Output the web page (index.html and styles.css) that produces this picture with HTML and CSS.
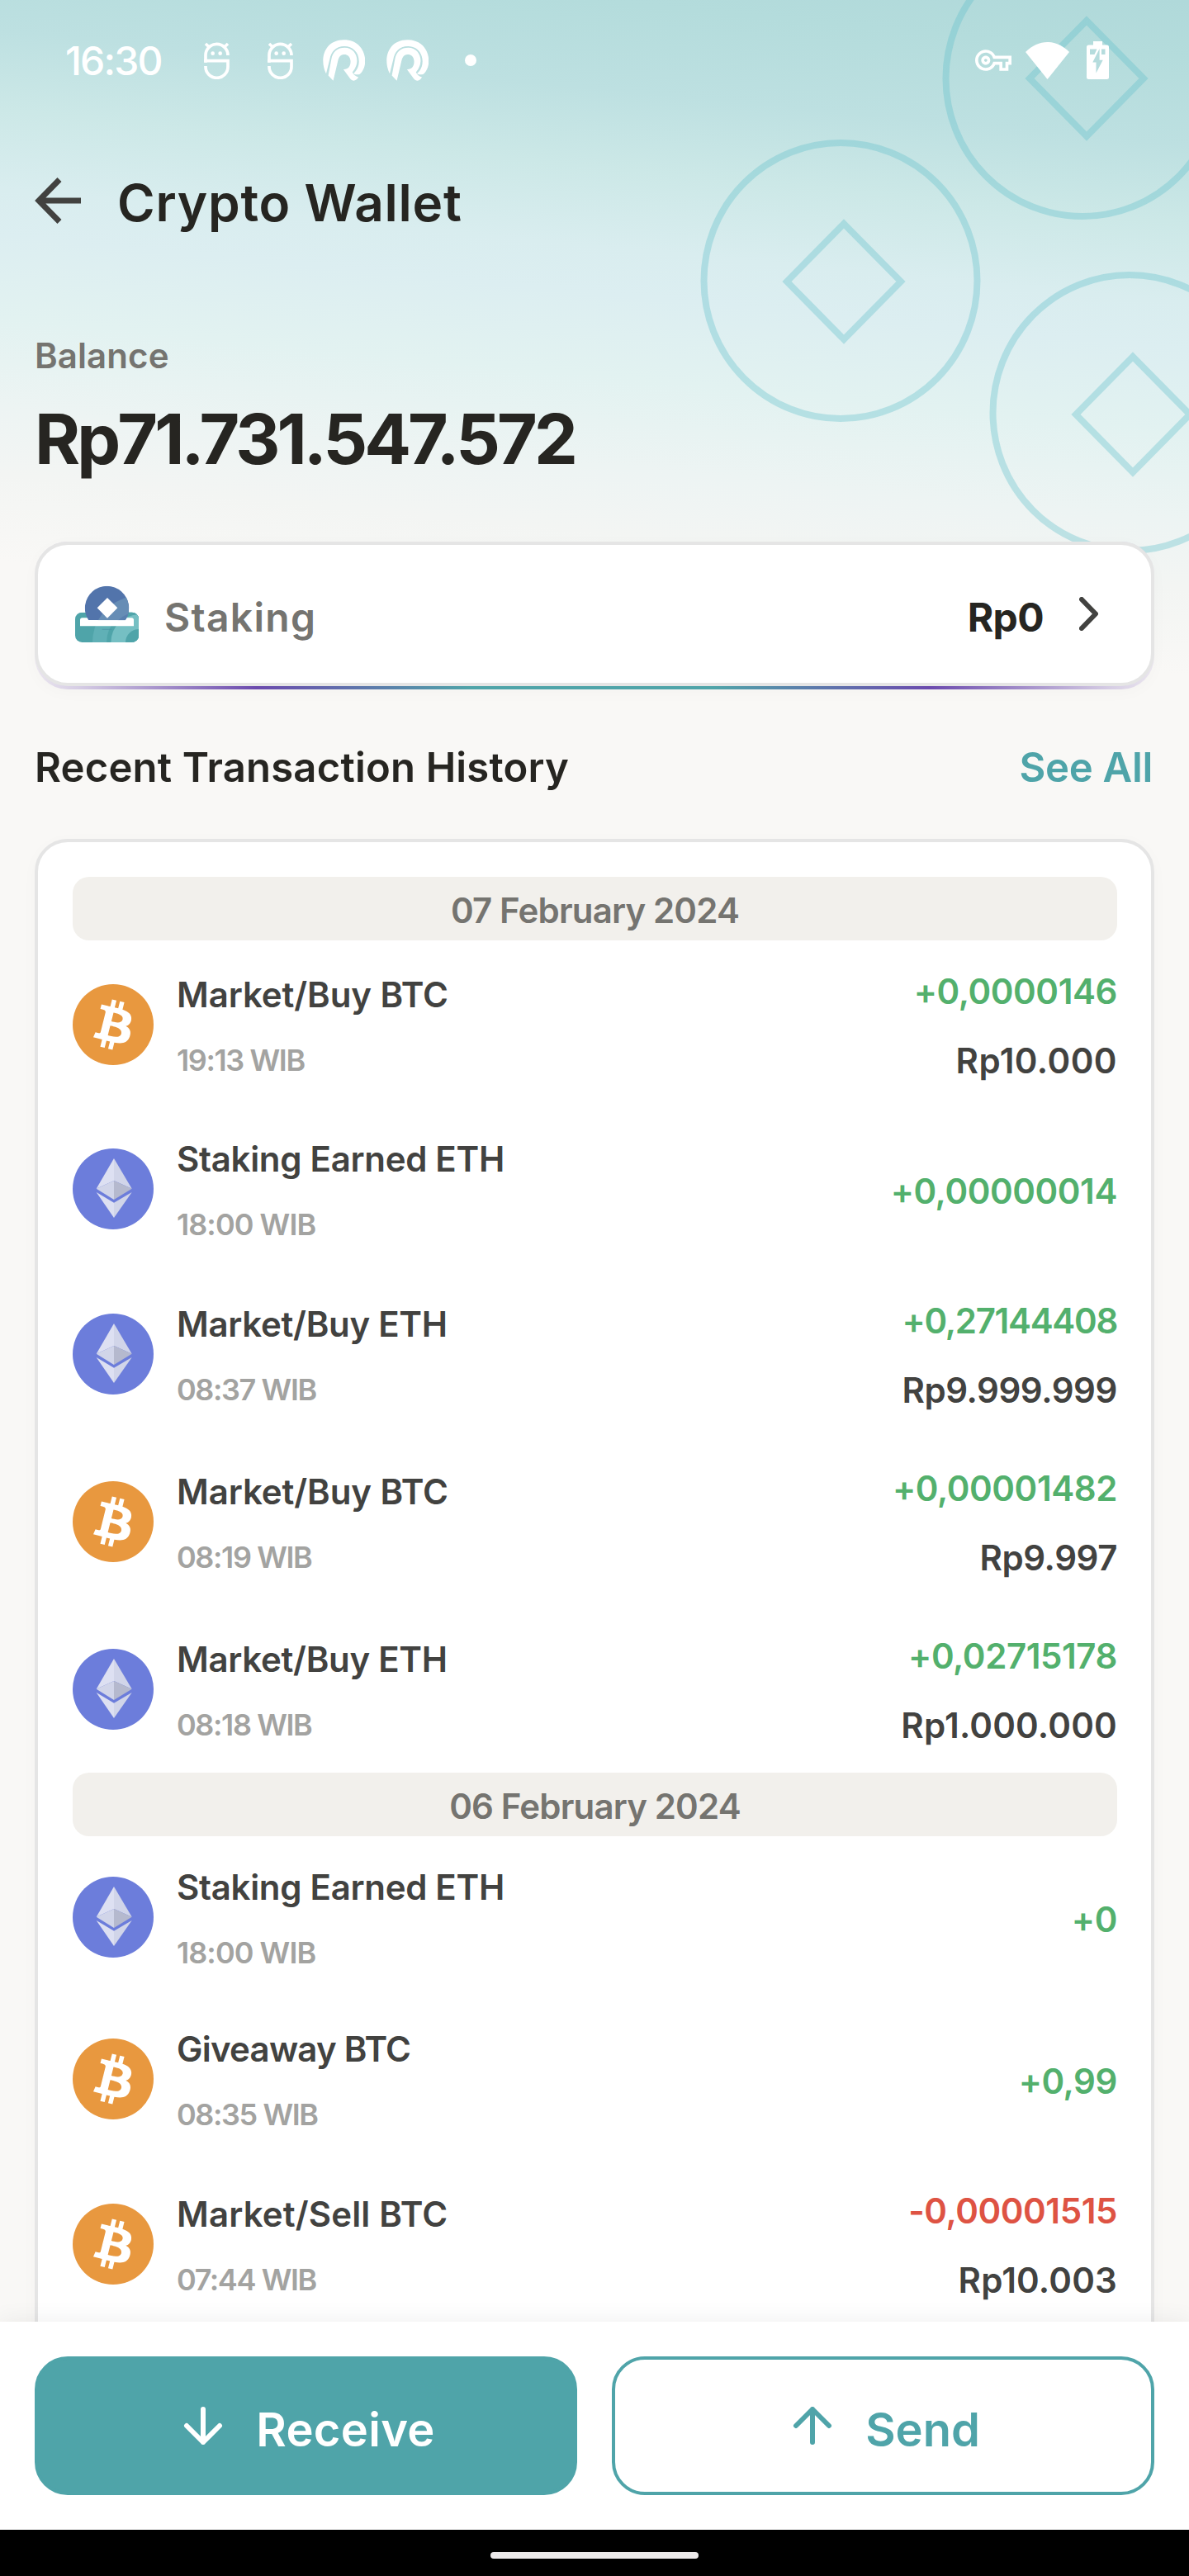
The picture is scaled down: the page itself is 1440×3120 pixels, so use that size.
FILE: index.html
```html
<!DOCTYPE html>
<html lang="en">
<head>
<meta charset="utf-8">
<title>Crypto Wallet</title>
<link rel="stylesheet" href="styles.css">
</head>
<body>
<svg class="defs" width="0" height="0" aria-hidden="true">
  <symbol id="face" viewBox="0 0 93 135">
    <g fill="none" stroke="#fff" stroke-width="11">
      <path d="M6 74V48A40.500 41 0 0 1 87 48"/>
      <path d="M0 68H87V90A40.500 40 0 0 1 6 90V87"/>
      <path d="M6 6L19 18M87 6L74 18"/>
    </g>
    <circle cx="32" cy="41" r="7" fill="#fff"/><circle cx="59" cy="41" r="7" fill="#fff"/>
  </symbol>
  <symbol id="arch" viewBox="0 0 154 150">
    <g fill="#fff">
      <path d="M12 124C-14 72 5 0 77 0C150 0 168 75 146 112C142 120 138 124 134 126C124 129 116 127 112 123C126 112 132 96 132 79C132 45 108 24 79 24C46 24 30 46 25 72Z"/>
      <path d="M20 131L31 72C36 43 54 29 80 29C108 29 126 51 125 79C124 98 114 112 108 119C112 128 120 134 130 137C122 152 108 153 100 142L75 108C94 109 103 94 101 76C99 60 88 53 77 54C63 55 58 65 55 78L38 150Z"/>
    </g>
  </symbol>
  <symbol id="btc" viewBox="0 0 32 32">
    <circle cx="16" cy="16" r="16" fill="#e8983f"/>
    <path fill="#fff" d="M23.189 14.02c.314-2.096-1.283-3.223-3.465-3.975l.708-2.84-1.728-.43-.69 2.765c-.454-.114-.92-.22-1.385-.326l.695-2.783L15.596 6l-.708 2.839c-.376-.086-.746-.17-1.104-.26l.002-.009-2.384-.595-.46 1.846s1.283.294 1.256.312c.7.175.826.638.805 1.006l-.806 3.235c.048.012.11.03.18.057l-.183-.045-1.13 4.532c-.086.212-.303.531-.793.41.018.025-1.256-.313-1.256-.313l-.858 1.978 2.25.561c.418.105.828.215 1.231.318l-.715 2.872 1.727.43.708-2.84c.472.127.93.245 1.378.357l-.706 2.828 1.728.43.715-2.866c2.948.558 5.164.333 6.097-2.333.752-2.146-.037-3.385-1.588-4.192 1.13-.26 1.98-1.003 2.207-2.538zm-3.95 5.538c-.533 2.147-4.148.986-5.32.695l.95-3.805c1.172.293 4.929.872 4.37 3.11zm.535-5.569c-.487 1.953-3.495.96-4.47.717l.86-3.45c.975.243 4.118.696 3.61 2.733z"/>
  </symbol>
  <symbol id="eth" viewBox="0 0 98 98">
    <circle cx="49" cy="49" r="49" fill="#6c7ddb"/>
    <path fill="#dde0f2" d="M50 12L28.700 48.700L50 39Z"/>
    <path fill="#d1d5e9" d="M50 12L71.700 48.700L50 39Z"/>
    <path fill="#d1d5e9" d="M28.700 48.700L50 39V62Z"/>
    <path fill="#b5b9ce" d="M71.700 48.700L50 39V62Z"/>
    <path fill="#dde0f2" d="M28.700 53L50 65.700V84Z"/>
    <path fill="#d1d5e9" d="M71.700 53L50 65.700V84Z"/>
  </symbol>
</svg>

<div class="screen">
  <svg class="coins" width="600" height="700" viewBox="840 0 600 700" aria-hidden="true">
    <g fill="none" stroke="#65c1cb" stroke-opacity=".37" stroke-width="8">
      <ellipse cx="1311" cy="95" rx="165.500" ry="167"/>
      <path d="M1316 25L1385 95L1316 165L1247 95Z"/>
      <ellipse cx="1018" cy="340" rx="165.500" ry="167"/>
      <path d="M1022 271L1091 341L1022 411L953 341Z"/>
      <ellipse cx="1368" cy="500" rx="165.500" ry="167"/>
      <path d="M1372 432L1441 502L1372 572L1303 502Z"/>
    </g>
  </svg>

  <main class="content">
    <div class="status">
      <span class="clock">16:30</span>
      <div class="notes">
        <svg width="31" height="45"><use href="#face"/></svg>
        <svg class="second-face" width="31" height="45"><use href="#face"/></svg>
        <svg class="first-arch" width="51" height="50"><use href="#arch"/></svg>
        <svg class="second-arch" width="51" height="50"><use href="#arch"/></svg>
        <i class="dot"></i>
      </div>
      <div class="system">
        <svg width="44" height="26" viewBox="0 5 24 14"><path fill="#fff" d="M22 19h-6v-4h-2.680c-1.140 2.420-3.600 4-6.320 4-3.860 0-7-3.140-7-7s3.140-7 7-7c2.720 0 5.170 1.580 6.320 4H24v6h-2v4zm-4-2h2v-4h2v-2H11.940l-.230-.670C11.010 8.340 9.110 7 7 7c-2.760 0-5 2.240-5 5s2.240 5 5 5c2.110 0 4.010-1.340 4.710-3.330l.230-.670H18v4zM7 15c-1.650 0-3-1.350-3-3s1.350-3 3-3 3 1.350 3 3-1.350 3-3 3zm0-4c-.550 0-1 .450-1 1s.450 1 1 1 1-.450 1-1-.450-1-1-1z"/></svg>
        <svg class="wifi" width="53" height="45" viewBox="0 0 53 45"><path fill="#fff" d="M0 12C16 -4 37 -4 53 12L26.500 45Z"/></svg>
        <svg class="battery" width="27" height="46" viewBox="0 0 27 46"><path fill="#fff" d="M8 0H19V4.500H24.500A2.500 2.500 0 0 1 27 7V43.500A2.500 2.500 0 0 1 24.500 46H2.500A2.500 2.500 0 0 1 0 43.500V7A2.500 2.500 0 0 1 2.500 4.500H8Z"/><path fill="#b5dcdd" d="M4 9.500H12.500L9.500 16H4ZM18 9.500H22.500V16H18ZM15.600 9L7.300 25.400H11.500V38.500L19.700 22.800H15.600Z"/></svg>
      </div>
    </div>

    <header class="appbar">
      <svg width="56" height="56" viewBox="0 0 56 56"><path fill="none" stroke="#424240" stroke-width="7" d="M30 2.500L5 28L30 53.500M4 28H56"/></svg>
      <h1>Crypto Wallet</h1>
    </header>

    <p class="label">Balance</p>
    <p class="total">Rp71.731.547.572</p>

    <div class="staking-edge">
      <div class="staking">
        <svg width="77" height="69" viewBox="0 0 231 207">
          <defs>
            <clipPath id="tray"><rect y="98" width="231" height="109" rx="25"/></clipPath>
            <clipPath id="coin"><path d="M49 127A80 80 0 1 1 182 127Z"/></clipPath>
          </defs>
          <g clip-path="url(#tray)">
            <path fill="#4fa4a9" d="M0 98H231V207H0Z"/>
            <circle cx="231" cy="207" r="168" fill="#60b0b6"/>
            <circle cx="231" cy="207" r="117" fill="#4fa4a9"/>
            <circle cx="231" cy="207" r="101" fill="#75bfc3"/>
            <circle cx="231" cy="207" r="48" fill="#4fa4a9"/>
          </g>
          <path fill="#fff" d="M18 126Q18 118 26 118H205Q213 118 213 126V148H18Z"/>
          <g clip-path="url(#coin)">
            <path fill="#5274ab" d="M0 0H231V127H0Z"/>
            <circle cx="231" cy="207" r="168" fill="#668db5"/>
            <circle cx="231" cy="207" r="110" fill="#5a80b0"/>
          </g>
          <path fill="#fff" d="M117 45L154 82L117 119L80 82Z"/>
          <path stroke="#4c90a4" stroke-width="2" d="M98 160H133"/>
        </svg>
        <span class="staking-name">Staking</span>
        <span class="staking-value">Rp0</span>
        <svg width="23" height="41" viewBox="0 0 23 41"><path fill="none" stroke="#424240" stroke-width="6" stroke-linecap="round" stroke-linejoin="round" d="M3 3L20 20.500L3 38"/></svg>
      </div>
    </div>

    <div class="heading">
      <h2>Recent Transaction History</h2>
      <a class="see-all">See All</a>
    </div>

    <section class="list">
      <div class="date">07 February 2024</div>
      <div class="row">
        <svg class="token"><use href="#btc"/></svg>
        <div class="what"><span class="name even">Market/Buy BTC</span><span class="time">19:13 WIB</span></div>
        <div class="sum"><span class="up">+0,0000146</span><span class="open">Rp10.000</span></div>
      </div>
      <div class="row short">
        <svg class="token"><use href="#eth"/></svg>
        <div class="what"><span class="name">Staking Earned ETH</span><span class="time open">18:00 WIB</span></div>
        <div class="sum"><span class="up">+0,00000014</span></div>
      </div>
      <div class="row">
        <svg class="token"><use href="#eth"/></svg>
        <div class="what"><span class="name">Market/Buy ETH</span><span class="time">08:37 WIB</span></div>
        <div class="sum"><span class="up tight">+0,27144408</span><span>Rp9.999.999</span></div>
      </div>
      <div class="row">
        <svg class="token"><use href="#btc"/></svg>
        <div class="what"><span class="name even">Market/Buy BTC</span><span class="time">08:19 WIB</span></div>
        <div class="sum"><span class="up">+0,00001482</span><span>Rp9.997</span></div>
      </div>
      <div class="row">
        <svg class="token"><use href="#eth"/></svg>
        <div class="what"><span class="name">Market/Buy ETH</span><span class="time">08:18 WIB</span></div>
        <div class="sum"><span class="up">+0,02715178</span><span class="even">Rp1.000.000</span></div>
      </div>
      <div class="date">06 February 2024</div>
      <div class="row short">
        <svg class="token"><use href="#eth"/></svg>
        <div class="what"><span class="name">Staking Earned ETH</span><span class="time open">18:00 WIB</span></div>
        <div class="sum"><span class="up">+0</span></div>
      </div>
      <div class="row short">
        <svg class="token"><use href="#btc"/></svg>
        <div class="what"><span class="name close">Giveaway BTC</span><span class="time">08:35 WIB</span></div>
        <div class="sum"><span class="up">+0,99</span></div>
      </div>
      <div class="row">
        <svg class="token"><use href="#btc"/></svg>
        <div class="what"><span class="name loose">Market/Sell BTC</span><span class="time">07:44 WIB</span></div>
        <div class="sum"><span class="down">-0,00001515</span><span class="even">Rp10.003</span></div>
      </div>
    </section>
  </main>

  <footer class="actions">
    <button class="button primary">
      <svg width="64" height="46" viewBox="-9 0 64 46"><path fill="none" stroke="#fff" stroke-width="6" stroke-linecap="round" stroke-linejoin="round" d="M23 3V43M3 23L23 43L43 23"/></svg>
      <span>Receive</span>
    </button>
    <button class="button outline">
      <svg width="64" height="46" viewBox="-9 0 64 46"><path fill="none" stroke="#4fa4a9" stroke-width="6" stroke-linecap="round" stroke-linejoin="round" d="M23 43V3M3 23L23 3L43 23"/></svg>
      <span>Send</span>
    </button>
  </footer>
  <nav class="gesture"><i></i></nav>
</div>
</body>
</html>
```
FILE: styles.css
```css
* { box-sizing: border-box; }

body {
  margin: 0;
  font-family: Inter, "Open Sans", sans-serif;
  font-weight: 600;
  color: #262521;
}

h1, h2, p { margin: 0; font-weight: 600; }
svg { display: block; flex: none; }
.defs { position: absolute; }

.screen {
  position: relative;
  display: flex;
  flex-direction: column;
  width: 1440px;
  height: 3120px;
  overflow: hidden;
  background:
    linear-gradient(185.5deg, #b0d9da 0, #b4dcdc 70px, #bde0e1 175px, #cce8e7 270px, #d9edef 365px, #dceef1 422px, #e2f2f1 520px, #edf4f3 630px, #f3f5f3 710px, #f9f8f6 815px, #f9f8f6 100%) no-repeat 0 0 / 1440px 900px,
    #f9f8f6;
}

/* decorative coins behind the header */
.coins { position: absolute; top: 0; right: 0; }

.content {
  position: relative;
  height: 2812px;
  padding: 0 42px;
  overflow: hidden;
}

/* status bar */
.status {
  display: flex;
  align-items: center;
  height: 146px;
  padding: 0 55px 0 37px;
  color: #fff;
}
.clock { width: 168px; font-size: 48px; font-weight: 550; letter-spacing: -1.8px; }
.notes { display: flex; align-items: center; }
.second-face { margin-left: 46px; }
.first-arch { margin-left: 36px; }
.second-arch { margin-left: 26px; }
.dot { width: 14px; height: 14px; margin-left: 44px; border-radius: 50%; background: #fff; }
.system { display: flex; align-items: center; margin-left: auto; }
.wifi { margin-left: 17px; }
.battery { margin-left: 21px; }

.appbar { display: flex; align-items: center; gap: 44px; height: 194px; }
.appbar h1 { padding-top: 5px; font-size: 62px; letter-spacing: .78px; }

.label {
  margin-top: 61px;
  font-size: 42px;
  line-height: 60px;
  letter-spacing: .1px;
  color: #757470;
}
.total { margin-top: 21px; font-size: 84px; font-weight: 650; line-height: 100px; letter-spacing: -3.9px; }

/* staking card with a coloured lower edge */
.staking-edge {
  margin-top: 74px;
  padding-bottom: 4px;
  border-radius: 40px;
  background: linear-gradient(90deg, rgba(107, 74, 174, .1), rgba(107, 74, 174, .25) 4%, #6b4aae 19.8%, #4fa4a9 39%, #4fa4a9 60.5%, #6b4aae 80%, rgba(107, 74, 174, .25) 96%, rgba(107, 74, 174, .1));
  box-shadow: 0 4px 20px rgba(0, 0, 0, .025);
}
.staking {
  display: flex;
  align-items: center;
  height: 175px;
  padding: 0 64px 0 45px;
  border: 4px solid #e5e5e5;
  border-radius: 40px;
  background: #fff;
  font-size: 48px;
}
.staking-name { padding-top: 8px; margin-left: 31px; letter-spacing: 1.3px; color: #757470; }
.staking-value { padding-top: 8px; margin: 0 43px 0 auto; font-weight: 650; letter-spacing: -.6px; }

.heading {
  display: flex;
  justify-content: space-between;
  margin-top: 65px;
  font-size: 49px;
  line-height: 60px;
}
.heading h2 { font-size: 49px; letter-spacing: .19px; }
.see-all { padding-right: 2px; letter-spacing: -.27px; color: #4fa4a9; }

/* transactions */
.list {
  height: 1900px;
  margin-top: 56px;
  padding: 42px 41px 0 42px;
  border: 4px solid #e5e5e5;
  border-radius: 40px;
  background: #fff;
  box-shadow: 0 4px 20px rgba(0, 0, 0, .025);
}
.date {
  height: 77px;
  padding-top: 5px;
  border-radius: 20px;
  background: #f2f0ec;
  font-size: 42px;
  line-height: 72px;
  letter-spacing: -.84px;
  text-align: center;
  color: #757470;
}
.row { display: flex; align-items: center; height: 203px; font-size: 42px; line-height: 50px; color: #424240; }
.row.short { height: 196px; }
.token { width: 98px; height: 98px; }
.what { display: flex; flex-direction: column; gap: 29px; margin-left: 28px; padding-top: 7px; }
.name { letter-spacing: -.3px; }
.name.even { letter-spacing: -.09px; }
.name.loose { letter-spacing: .15px; }
.name.close { letter-spacing: -.75px; }
.time { font-size: 36px; letter-spacing: -1.4px; color: #a3a3a1; }
.time.open { letter-spacing: -.95px; }
.sum { display: flex; flex-direction: column; align-items: flex-end; gap: 34px; margin-left: auto; padding: 5px 0 0; letter-spacing: -.42px; }
.sum .tight { letter-spacing: -1.3px; }
.sum .even { letter-spacing: .2px; }
.sum .open { letter-spacing: .45px; }
.up { color: #53b06d; }
.down { color: #de5343; }

/* bottom actions */
.actions {
  position: relative;
  display: flex;
  gap: 42px;
  height: 252px;
  padding: 42px;
  background: #fff;
  box-shadow: 0 0 28px rgba(0, 0, 0, .07);
}
.button {
  display: flex;
  flex: 1;
  align-items: center;
  justify-content: center;
  gap: 32px;
  padding: 0;
  border: 4px solid #4fa4a9;
  border-radius: 40px;
  font: 600 56px Inter, "Open Sans", sans-serif;
}
.button span { padding-top: 9px; }
.primary { background: #4fa4a9; color: #fff; letter-spacing: .3px; }
.outline { background: #fff; color: #4fa4a9; }

.gesture {
  position: relative;
  display: flex;
  justify-content: center;
  height: 56px;
  padding-top: 27px;
  background: #000;
}
.gesture i { width: 252px; height: 8px; border-radius: 4px; background: #ece9ea; }
```
